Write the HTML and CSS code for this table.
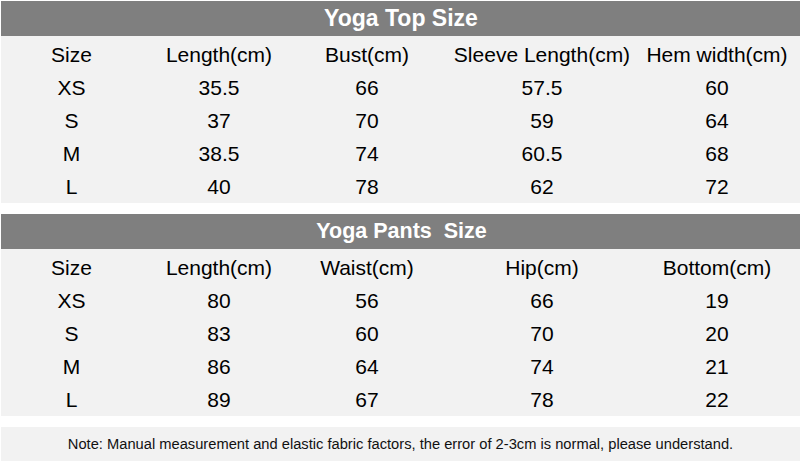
FILE: index.html
```html
<!DOCTYPE html>
<html>
<head>
<meta charset="utf-8">
<link rel="stylesheet" href="styles.css">
</head>
<body>
<div class="sheet">
  <section class="block">
    <h2 class="title title-top">Yoga Top Size</h2>
    <div class="table">
      <div>Size</div><div>Length(cm)</div><div>Bust(cm)</div><div>Sleeve Length(cm)</div><div>Hem width(cm)</div>
      <div>XS</div><div>35.5</div><div>66</div><div>57.5</div><div>60</div>
      <div>S</div><div>37</div><div>70</div><div>59</div><div>64</div>
      <div>M</div><div>38.5</div><div>74</div><div>60.5</div><div>68</div>
      <div>L</div><div>40</div><div>78</div><div>62</div><div>72</div>
    </div>
  </section>
  <div class="gap"></div>
  <section class="block">
    <h2 class="title title-pants">Yoga Pants  Size</h2>
    <div class="table">
      <div>Size</div><div>Length(cm)</div><div>Waist(cm)</div><div>Hip(cm)</div><div>Bottom(cm)</div>
      <div>XS</div><div>80</div><div>56</div><div>66</div><div>19</div>
      <div>S</div><div>83</div><div>60</div><div>70</div><div>20</div>
      <div>M</div><div>86</div><div>64</div><div>74</div><div>21</div>
      <div>L</div><div>89</div><div>67</div><div>78</div><div>22</div>
    </div>
  </section>
  <div class="gap"></div>
  <p class="note">Note: Manual measurement and elastic fabric factors, the error of 2-3cm is normal, please understand.</p>
</div>
</body>
</html>
```
FILE: styles.css
```css
html, body {
  margin: 0;
  padding: 0;
  background: #ffffff;
}
.sheet {
  width: 799px;
  margin-left: 1px;
  padding-top: 1px;
  display: flex;
  flex-direction: column;
  font-family: "Liberation Sans", Arial, sans-serif;
  color: #000;
}
.block {
  display: flex;
  flex-direction: column;
}
.title {
  margin: 0;
  height: 35px;
  line-height: 35px;
  background: #7f7f7f;
  color: #ffffff;
  text-align: center;
  font-weight: bold;
  white-space: pre;
}
.title-top {
  font-size: 23px;
  padding-left: 1px;
}
.title-pants {
  font-size: 21.5px;
  padding-left: 2px;
}
.table {
  background: #f2f2f2;
  display: grid;
  grid-template-columns: 141px 154px 142px 208px 142px 12px;
  grid-auto-rows: 33px;
  padding-top: 2px;
  font-size: 21px;
}
.table > div {
  text-align: center;
  line-height: 33px;
}
.table > div:nth-child(5n+1) {
  grid-column: 1;
}
.gap {
  height: 11px;
  background: #ffffff;
}
.note {
  margin: 0;
  height: 34px;
  line-height: 34px;
  background: #f2f2f2;
  font-size: 14.7px;
  text-align: center;
  color: #111;
}
```
